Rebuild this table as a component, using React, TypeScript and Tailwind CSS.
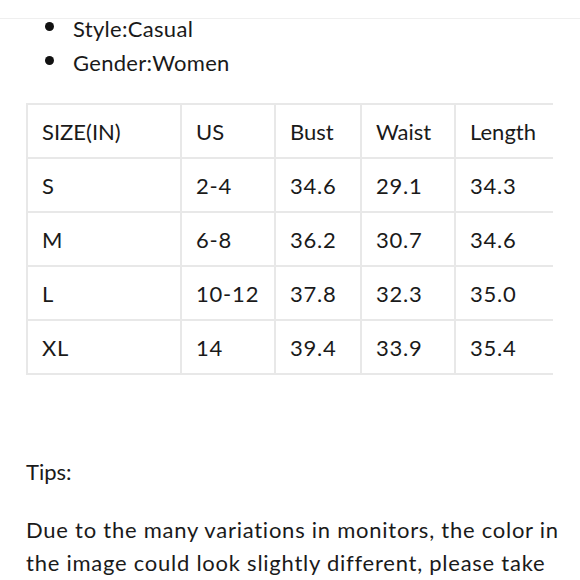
import React from "react";

const rows = [
  ["SIZE(IN)", "US", "Bust", "Waist", "Length"],
  ["S", "2-4", "34.6", "29.1", "34.3"],
  ["M", "6-8", "36.2", "30.7", "34.6"],
  ["L", "10-12", "37.8", "32.3", "35.0"],
  ["XL", "14", "39.4", "33.9", "35.4"],
];

const widths = ["w-[156px]", "w-[94px]", "w-[86px]", "w-[94px]", "w-[97px]"];

export default function App() {
  return (
    <div
      className="w-[580px] h-[580px] overflow-hidden bg-white text-[#1a1a1a]"
      style={{ fontFamily: "Lato, 'Noto Sans', sans-serif" }}
    >
      <div className="h-[19px] border-b border-[#efefef]" />
      <ul className="flex flex-col gap-[14px] -mt-[1px]">
        {["Style:Casual", "Gender:Women"].map((t) => (
          <li key={t} className="flex items-center h-[20px] text-[22px] tracking-[0.3px]">
            <span className="ml-[45px] mb-[3px] w-[9px] h-[9px] rounded-full bg-[#111]" />
            <span className="ml-[19px]">{t}</span>
          </li>
        ))}
      </ul>
      <div className="ml-[26px] mt-[31px] w-[527px]">
        <div className="border-t-2 border-[#e8e8e8]">
          {rows.map((r, i) => (
            <div key={i} className="flex h-[54px] border-b-2 border-[#e8e8e8]">
              {r.map((c, j) => (
                <div
                  key={j}
                  className={`${widths[j]} flex items-center pl-[14px] text-[22px] ${
                    i === 0 ? "" : "tracking-[0.8px]"
                  } ${j < 4 ? "border-r-2 border-[#e8e8e8]" : ""} ${
                    j === 0 ? "border-l-2 border-[#e8e8e8]" : ""
                  }`}
                >
                  {c}
                </div>
              ))}
            </div>
          ))}
        </div>
      </div>
      <div className="pl-[26px] mt-[80px] text-[22px]">
        <p className="leading-[33px]">Tips:</p>
        <p className="mt-[25px] leading-[33px] tracking-[0.75px]">
          Due to the many variations in monitors, the color in the image could look slightly different, please take
        </p>
      </div>
    </div>
  );
}
